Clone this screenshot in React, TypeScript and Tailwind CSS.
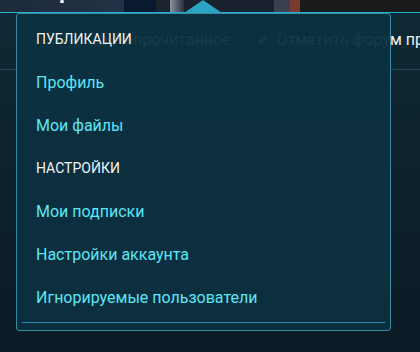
import React from "react";

const items: { label: string; header?: boolean }[] = [
  { label: "Публикации", header: true },
  { label: "Профиль" },
  { label: "Мои файлы" },
  { label: "Настройки", header: true },
  { label: "Мои подписки" },
  { label: "Настройки аккаунта" },
  { label: "Игнорируемые пользователи" },
];

export default function App() {
  return (
    <div className="relative w-[420px] h-[352px] overflow-hidden bg-gradient-to-b from-[#0e2a36] to-[#0b1a24] font-['Roboto','Liberation_Sans',sans-serif]">
      {/* header image strip */}
      <div className="h-[12px] flex bg-[#161c24]">
        <div className="w-[124px] bg-gradient-to-r from-[#1d2a3a] to-[#243246] relative">
          <div className="absolute left-[60px] top-0 w-[4px] h-[3px] rounded-full bg-white" />
        </div>
        <div className="w-[32px] bg-[#0a1930]" />
        <div className="w-[14px] bg-[#1c2430]" />
        <div className="w-[14px] bg-gradient-to-r from-[#8a93a0] to-[#2a3340]" />
        <div className="w-[90px] bg-[#1a2230]" />
        <div className="w-[16px] bg-[#3a4050]" />
        <div className="w-[10px] bg-[#7a3a30]" />
        <div className="flex-1 bg-[#1a1a1c]" />
      </div>
      <div className="h-px bg-[#22b4d0]" />

      {/* nav bar behind the menu */}
      <div className="h-[57px] border-b border-[#1f4656] flex items-center whitespace-nowrap text-[16px] text-[#eef1f2] pb-[2px]">
        <span className="ml-[93px] shrink-0 w-[14px] h-[11px] border-2 border-[#e4e8ea] rounded-sm" />
        <span className="ml-[6px]">Непрочитанное</span>
        <span className="ml-[26px] text-[14px]">✔</span>
        <span className="ml-[8px]">Отметить форум прочитанным</span>
      </div>

      {/* dropdown */}
      <div className="absolute left-[184px] top-0 w-0 h-0 border-x-[19px] border-x-transparent border-b-[13px] border-b-[#2aa3c4]" />
      <div className="absolute left-[16px] top-[13px] w-[375px] h-[318px] rounded-[3px] border border-[#3d8aa0] bg-[#0c3040]/[0.95] pt-[4px] flex flex-col">
        {items.map((it) =>
          it.header ? (
            <div key={it.label} className="h-[43px] flex items-center pl-[19px] text-[14px] uppercase text-[#f0f3f4] pb-[1px]">
              {it.label}
            </div>
          ) : (
            <div key={it.label} className="h-[43px] flex items-center pl-[19px] text-[16px] text-[#5ce6f4]">
              {it.label}
            </div>
          )
        )}
        <div className="mt-[3px] mx-[5px] h-px bg-[#2a8fb4]" />
      </div>
    </div>
  );
}
